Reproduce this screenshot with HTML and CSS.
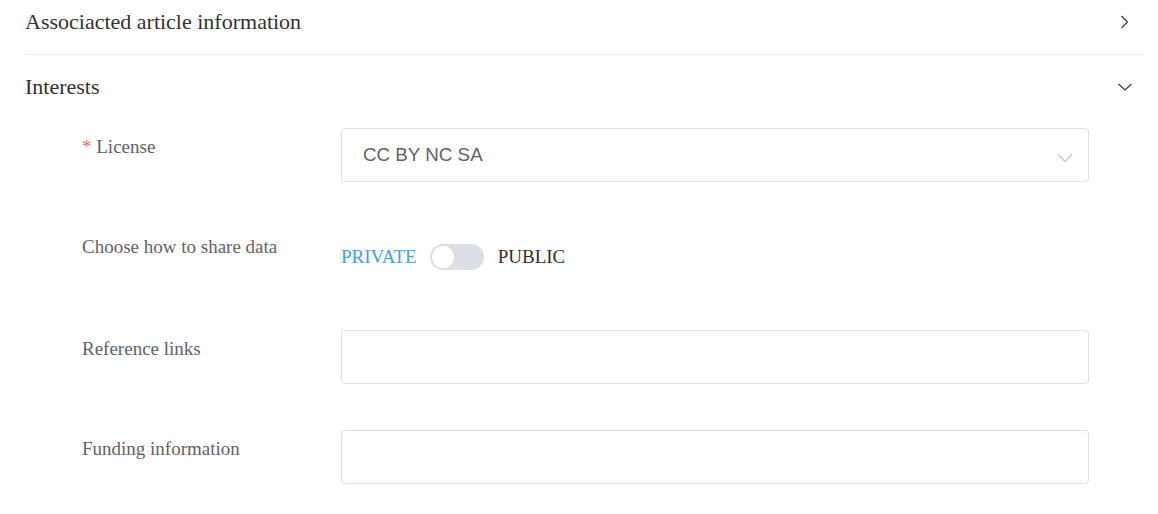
FILE: index.html
```html
<!DOCTYPE html>
<html lang="en">

<head>
    <meta charset="UTF-8">
    <meta name="viewport" content="width=device-width, initial-scale=1.0">
    <title>Article details</title>
    <link rel="stylesheet" href="styles.css">
</head>

<body>
    <div class="collapse">
        <!-- Collapsed section -->
        <div class="collapse-item">
            <div class="collapse-header">
                <span>Associacted article information</span>
                <svg class="arrow" width="14" height="14" viewBox="0 0 14 14">
                    <path d="M3.5 1 L9.5 7 L3.5 13" />
                </svg>
            </div>
        </div>

        <!-- Open section -->
        <div class="collapse-item open">
            <div class="collapse-header">
                <span>Interests</span>
                <svg class="arrow" width="14" height="14" viewBox="0 0 14 14">
                    <path d="M0.5 4 L7 10 L13.5 4" />
                </svg>
            </div>

            <form class="form">
                <div class="form-item">
                    <label class="form-label"><span class="required">*</span> License</label>
                    <div class="form-content">
                        <div class="select">
                            <span>CC BY NC SA</span>
                            <svg class="select-arrow" width="16" height="10" viewBox="0 0 16 10">
                                <path d="M1 1.5 L8 8.5 L15 1.5" />
                            </svg>
                        </div>
                    </div>
                </div>

                <div class="form-item">
                    <label class="form-label">Choose how to share data</label>
                    <div class="form-content switch-row">
                        <span class="switch-label active">PRIVATE</span>
                        <span class="switch"><span class="switch-knob"></span></span>
                        <span class="switch-label">PUBLIC</span>
                    </div>
                </div>

                <div class="form-item">
                    <label class="form-label">Reference links</label>
                    <div class="form-content">
                        <input class="input" type="text">
                    </div>
                </div>

                <div class="form-item">
                    <label class="form-label">Funding information</label>
                    <div class="form-content">
                        <input class="input" type="text">
                    </div>
                </div>
            </form>
        </div>
    </div>
</body>

</html>
```

FILE: styles.css
```css
body {
    margin: 0;
    font-family: "Liberation Serif", "Times New Roman", serif;
    color: #303133;
    background-color: #fff;
}

.collapse {
    margin-top: -10px;
    padding: 0 14px 0 25px;
}

.collapse-item {
    border-bottom: 1px solid #ebeef5;
}

.collapse-item.open {
    border-bottom: none;
}

.collapse-header {
    height: 64px;
    display: flex;
    align-items: center;
    justify-content: space-between;
    font-size: 22px;
    color: #303133;
}

.arrow {
    margin-right: 12px;
    fill: none;
    stroke: #303133;
    stroke-width: 1.1;
}

.form {
    padding-left: 57px;
    padding-top: 9px;
}

.form-item {
    display: flex;
    margin-bottom: 46px;
}

.form-label {
    width: 259px;
    flex-shrink: 0;
    padding-top: 8px;
    font-size: 19px;
    line-height: 22px;
    color: #606266;
}

.required {
    color: #f56c6c;
}

.form-content {
    width: 748px;
}

.select,
.input {
    box-sizing: border-box;
    width: 100%;
    height: 54px;
    border: 1px solid #dcdfe6;
    border-radius: 4px;
    background-color: #fff;
}

.select {
    display: flex;
    align-items: center;
    justify-content: space-between;
    padding: 0 15px 0 21px;
    font-family: "Liberation Sans", Arial, sans-serif;
    font-size: 18.8px;
    color: #606266;
}

.select-arrow {
    margin-top: 6px;
    fill: none;
    stroke: #c0c4cc;
    stroke-width: 1.1;
}

.input {
    display: block;
    padding: 0 15px;
    outline: none;
}

.switch-row {
    height: 56px;
    display: flex;
    align-items: center;
    margin-top: 1px;
    margin-bottom: -1px;
}

.switch-label {
    font-size: 19px;
    color: #303133;
}

.switch-label.active {
    color: #409eff;
}

.switch {
    position: relative;
    box-sizing: border-box;
    width: 54px;
    height: 26px;
    margin: 0 14px 0 13px;
    border-radius: 13px;
    background-color: #dcdfe6;
}

.switch-knob {
    position: absolute;
    top: 2px;
    left: 2px;
    width: 22px;
    height: 22px;
    border-radius: 50%;
    background-color: #fff;
}
```
